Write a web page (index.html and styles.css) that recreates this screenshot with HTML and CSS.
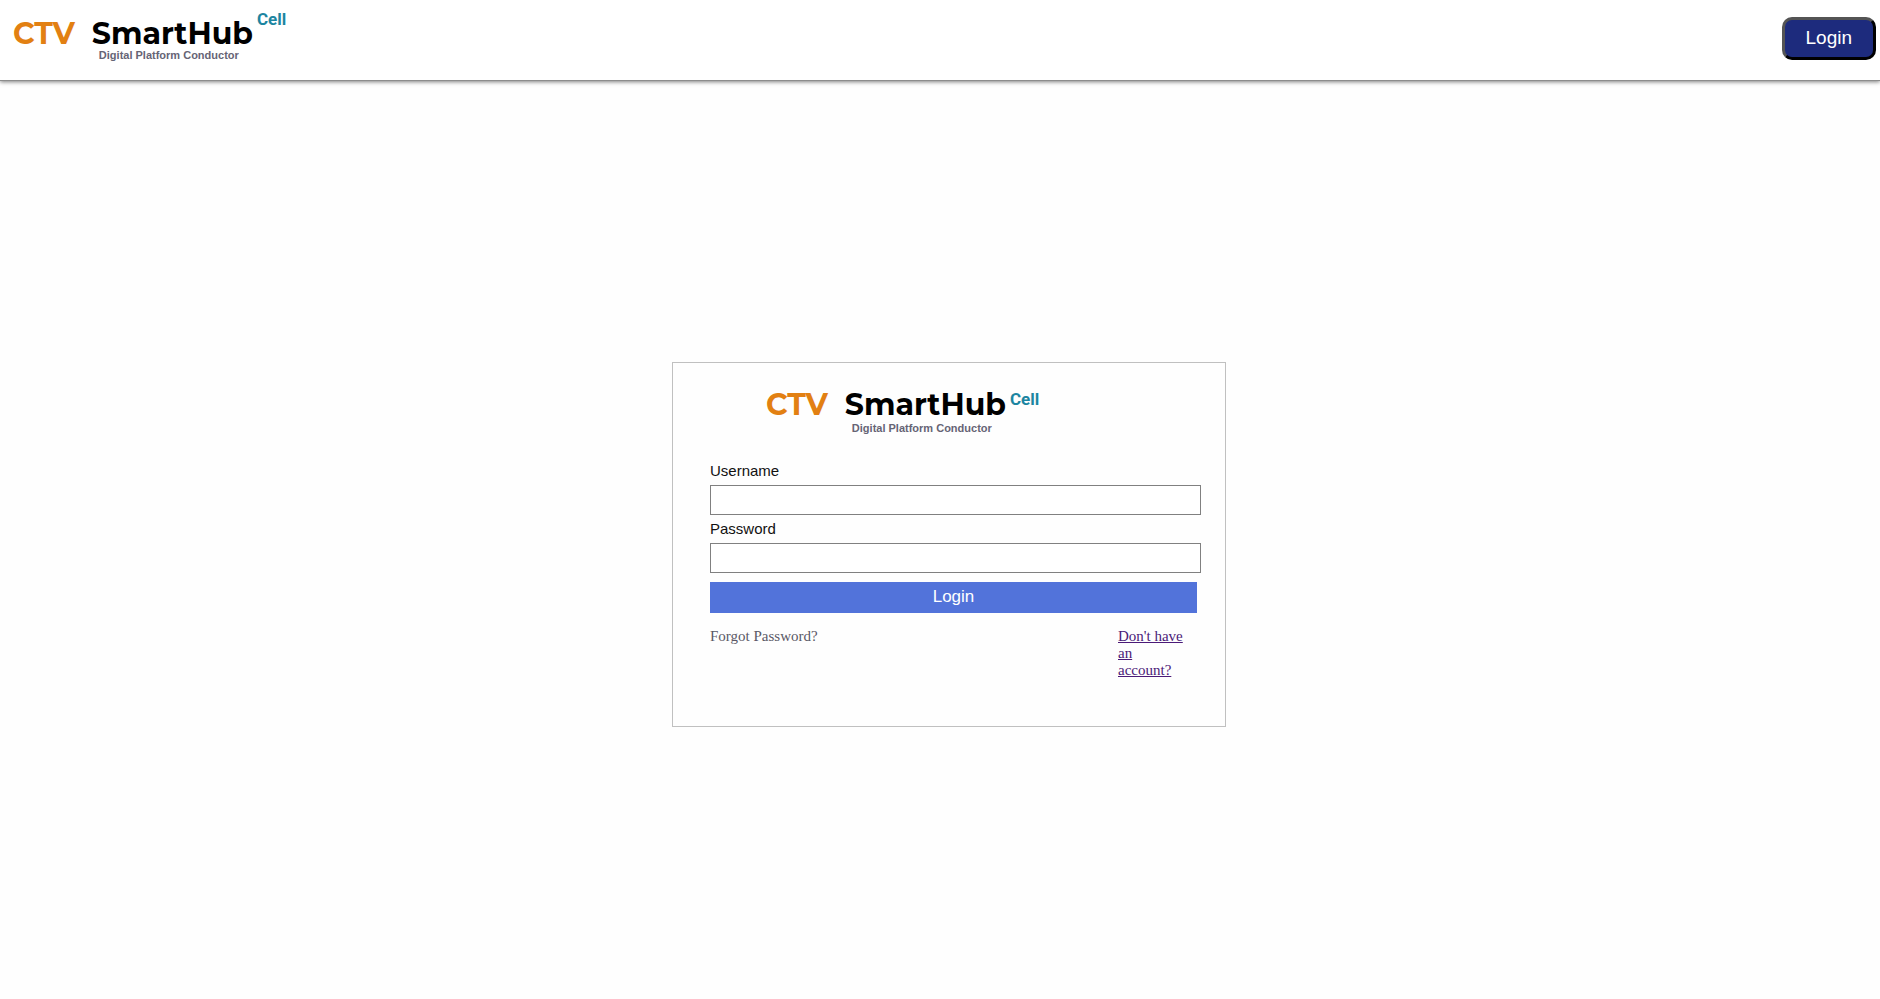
FILE: index.html
```html
<!DOCTYPE html>
<html lang="en">
<head>
<meta charset="utf-8">
<title>CTV SmartHub Cell</title>
<link rel="stylesheet" href="styles.css">
</head>
<body>
<header class="topbar">
  <div class="brand">
    <span class="brand-ctv">CTV</span>
    <div class="brand-main">
      <span class="brand-name">SmartHub</span>
      <span class="brand-tagline">Digital Platform Conductor</span>
    </div>
    <span class="brand-cell">Cell</span>
  </div>
  <button class="topbar-login" type="button">Login</button>
</header>
<main class="page">
  <form class="card">
    <div class="brand brand-card">
      <span class="brand-ctv">CTV</span>
      <div class="brand-main">
        <span class="brand-name">SmartHub</span>
        <span class="brand-tagline">Digital Platform Conductor</span>
      </div>
      <span class="brand-cell">Cell</span>
    </div>
    <label class="label" for="username">Username</label>
    <input class="field" id="username" name="username" type="text">
    <label class="label" for="password">Password</label>
    <input class="field" id="password" name="password" type="password">
    <button class="submit" type="submit">Login</button>
    <div class="links">
      <a class="forgot" href="#forgot">Forgot Password?</a>
      <a class="signup" href="#signup">Don't have an account?</a>
    </div>
  </form>
</main>
</body>
</html>
```

FILE: styles.css
```css
* {
  box-sizing: border-box;
}

body {
  margin: 0;
  min-height: 100vh;
  display: flex;
  flex-direction: column;
  background: #fefefe;
  font-family: "Liberation Sans", Arial, sans-serif;
}

.topbar {
  display: flex;
  justify-content: space-between;
  align-items: flex-start;
  min-height: 81px;
  padding: 11px 4px 0 13px;
  background: #fff;
  border-bottom: 1px solid #8c8c8c;
  box-shadow: 0 1px 4px rgba(0, 0, 0, 0.5);
}

.brand {
  display: flex;
  align-items: flex-start;
}

.brand-ctv,
.brand-name {
  font-family: Montserrat, "DejaVu Sans", sans-serif;
  font-size: 30px;
  font-weight: 700;
  line-height: 32px;
}

.brand-ctv {
  padding-top: 7px;
  margin-right: 17px;
  color: #e28012;
}

.brand-main {
  display: flex;
  flex-direction: column;
  padding-top: 7px;
  color: #000;
}

.brand-tagline {
  padding-left: 7px;
  font-size: 11px;
  font-weight: 700;
  line-height: 11px;
  color: #666475;
}

.brand-cell {
  margin-left: 4px;
  font-family: Roboto, sans-serif;
  font-size: 17px;
  font-weight: 700;
  line-height: 16px;
  color: #1c85a1;
}

.topbar-login {
  margin-top: 6px;
  padding: 7px 21px 9px;
  border: 3px outset #000;
  border-radius: 10px;
  background: #1d2b7d;
  color: #fff;
  font-family: inherit;
  font-size: 19px;
  line-height: 21px;
}

.page {
  flex: 1;
  display: flex;
  align-items: center;
  justify-content: center;
  padding: 8px 0 0 18px;
}

.card {
  display: flex;
  flex-direction: column;
  width: 100%;
  max-width: 554px;
  padding: 19px 24px 47px 37px;
  border: 1px solid #c0c0c0;
  background: #fefefe;
}

.brand-card {
  padding-left: 56px;
  margin-bottom: 28px;
}

.brand-card .brand-tagline {
  padding-top: 2px;
}

.brand-card .brand-cell {
  padding-top: 9px;
}

.label {
  margin-bottom: 6px;
  font-size: 15px;
  line-height: 17px;
  color: #111;
}

.field {
  height: 30px;
  margin-bottom: 5px;
  padding: 4px 8px;
  border: 1px solid #808080;
  background: #fff;
  font-size: 15px;
}

.submit {
  margin: 4px 4px 15px 0;
  padding: 5px 5px 6px;
  border: 0;
  background: #5273da;
  color: #fff;
  font-family: inherit;
  font-size: 17px;
  line-height: 20px;
}

.links {
  display: flex;
  justify-content: space-between;
  padding-right: 13px;
  font-family: "Liberation Serif", "Times New Roman", serif;
  font-size: 15px;
  line-height: 17px;
}

.forgot {
  color: #5a5966;
  text-decoration: none;
}

.signup {
  width: 70px;
  color: #4b1a78;
}
```
